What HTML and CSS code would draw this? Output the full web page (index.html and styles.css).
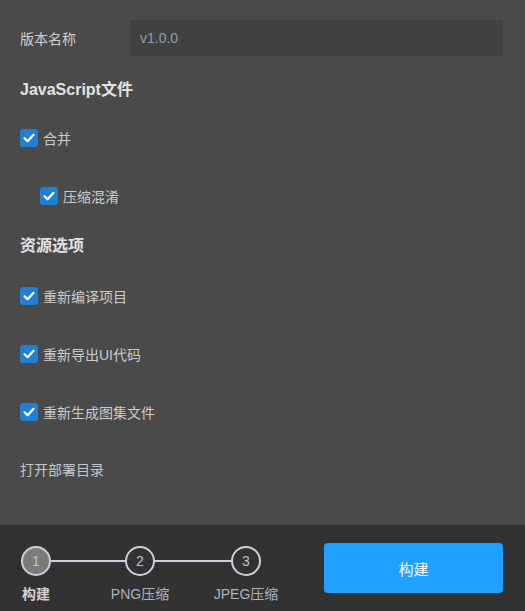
FILE: index.html
```html
<!DOCTYPE html>
<html lang="zh">
<head>
<meta charset="utf-8">
<link rel="stylesheet" href="styles.css">
</head>
<body>
<main class="panel">
  <div class="field">
    <span class="field-label">版本名称</span>
    <div class="field-input">v1.0.0</div>
  </div>
  <h2 class="heading h-js">JavaScript文件</h2>
  <label class="check c-merge"><span class="box"><svg viewBox="0 0 18 18"><path d="M4.5 9.2 L7.6 12.2 L13.5 5.8" fill="none" stroke="#fff" stroke-width="2.2" stroke-linecap="round" stroke-linejoin="round"/></svg></span>合并</label>
  <label class="check c-sub"><span class="box"><svg viewBox="0 0 18 18"><path d="M4.5 9.2 L7.6 12.2 L13.5 5.8" fill="none" stroke="#fff" stroke-width="2.2" stroke-linecap="round" stroke-linejoin="round"/></svg></span>压缩混淆</label>
  <h2 class="heading h-res">资源选项</h2>
  <label class="check c-first"><span class="box"><svg viewBox="0 0 18 18"><path d="M4.5 9.2 L7.6 12.2 L13.5 5.8" fill="none" stroke="#fff" stroke-width="2.2" stroke-linecap="round" stroke-linejoin="round"/></svg></span>重新编译项目</label>
  <label class="check c-next"><span class="box"><svg viewBox="0 0 18 18"><path d="M4.5 9.2 L7.6 12.2 L13.5 5.8" fill="none" stroke="#fff" stroke-width="2.2" stroke-linecap="round" stroke-linejoin="round"/></svg></span>重新导出UI代码</label>
  <label class="check c-next"><span class="box"><svg viewBox="0 0 18 18"><path d="M4.5 9.2 L7.6 12.2 L13.5 5.8" fill="none" stroke="#fff" stroke-width="2.2" stroke-linecap="round" stroke-linejoin="round"/></svg></span>重新生成图集文件</label>
  <div class="link">打开部署目录</div>
</main>
<footer class="footer">
  <div class="steps">
    <div class="step active"><span class="circle">1</span><span class="step-label">构建</span></div>
    <span class="line"></span>
    <div class="step"><span class="circle">2</span><span class="step-label">PNG压缩</span></div>
    <span class="line line-wide"></span>
    <div class="step"><span class="circle">3</span><span class="step-label">JPEG压缩</span></div>
  </div>
  <button class="build">构建</button>
</footer>
</body>
</html>
```
FILE: styles.css
```css
* { box-sizing: border-box; }
html, body { margin: 0; padding: 0; }
body {
  width: 525px;
  height: 611px;
  background: #4a4a4a;
  font-family: "Liberation Sans", "Noto Sans CJK SC", sans-serif;
  font-size: 14px;
  color: #c8c8c8;
  overflow: hidden;
}
.panel {
  height: 525px;
  padding: 20px 22px 0 20px;
  display: flex;
  flex-direction: column;
  align-items: flex-start;
}
.field {
  display: flex;
  align-items: center;
  width: 100%;
  height: 36px;
}
.field-label {
  width: 110px;
  color: #cfcfcf;
}
.field-input {
  flex: 1;
  height: 36px;
  background: #414141;
  color: #8d9db2;
  padding-left: 10px;
  display: flex;
  align-items: center;
}
.heading {
  margin: 0;
  font-size: 16px;
  font-weight: bold;
  line-height: 20px;
  color: #e2e2e2;
}
.h-js { margin-top: 24px; }
.h-res { margin-top: 30px; }
.check {
  display: flex;
  align-items: center;
  height: 20px;
  color: #cbcbcb;
}
.c-merge { margin-top: 28px; }
.c-sub { margin-top: 38px; margin-left: 20px; }
.c-first { margin-top: 30px; }
.c-next { margin-top: 38px; }
.box {
  width: 18px;
  height: 18px;
  border-radius: 3px;
  background: #2180d3;
  margin-right: 5px;
  display: flex;
}
.box svg { width: 18px; height: 18px; }
.link {
  margin-top: 38px;
  height: 20px;
  line-height: 20px;
  color: #c4c8ce;
}
.footer {
  height: 86px;
  background: #323232;
  display: flex;
  justify-content: space-between;
  padding: 18px 22px 0 21px;
}
.steps {
  display: flex;
  align-items: flex-start;
  padding-top: 3px;
}
.step {
  width: 30px;
  display: flex;
  flex-direction: column;
  align-items: center;
}
.circle {
  width: 30px;
  height: 30px;
  border-radius: 50%;
  border: 2px solid #c9d2de;
  display: flex;
  align-items: center;
  justify-content: center;
  color: #c2c2c2;
  font-size: 14px;
}
.active .circle { background: #7b7b7b; }
.step-label {
  margin-top: 9px;
  white-space: nowrap;
  line-height: 18px;
  color: #a9b4c3;
}
.active .step-label {
  font-weight: bold;
  color: #d2d2d2;
}
.line {
  width: 74px;
  height: 2px;
  margin-top: 14px;
  background: #c9d2de;
}
.line-wide { width: 76px; }
.build {
  width: 179px;
  height: 50px;
  border: 0;
  border-radius: 4px;
  background: #20a0ff;
  color: #fff;
  font-family: inherit;
  font-size: 15px;
  padding: 0;
}
```
